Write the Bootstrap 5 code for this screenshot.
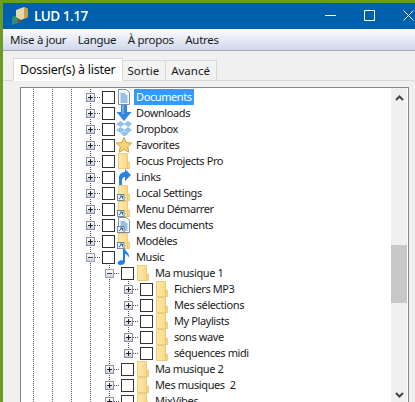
<!DOCTYPE html>
<html lang="fr"><head><meta charset="utf-8"><title>LUD 1.17</title>
<link rel="stylesheet" href="https://cdn.jsdelivr.net/npm/bootstrap@5.3.0/dist/css/bootstrap.min.css">
<style>
html,body{height:100%;overflow:hidden}
body{background:#6d9a22;font-family:"Noto Sans","Open Sans",sans-serif;color:#1a1a1a}
.wnd{height:399px;margin:3px 0 0 3px;background:#f0f0f0;overflow:hidden}
.ttl{height:26px;flex:none;background:#0060ae;color:#fff;padding-left:8px}
.ttl b{font:600 13.5px/24px "Open Sans",sans-serif;margin-left:5px;letter-spacing:-.5px}
.wbtns{margin-left:auto;width:100px;padding:0 0 2px 10px;gap:28px}
.mnu{height:22px;flex:none;background:linear-gradient(#fbfcfe,#d0d8ec);border-bottom:1px solid #a9adb4;font-size:11.5px;letter-spacing:-.3px;padding-left:7px;gap:11.500px}
.mnu span{line-height:21px}
.tabs{padding:8px 0 0 10px;border-bottom:1px solid #d9d9d9;height:30px;flex:none;--bs-nav-tabs-border-color:#d9d9d9}
.tabs .nav-link{font-size:11.5px;letter-spacing:0;color:#1a1a1a;padding:0 6px 0 5px;line-height:20px;height:21px;margin:1px 0 -1px;background:#f2f2f2;border:1px solid #d9d9d9;border-left-width:0;border-radius:0}
.tabs .nav-link.active{font-size:12.5px;letter-spacing:-.25px;background:#fff;height:23px;line-height:21px;margin:-1px 0 -1px;padding:0 6px;border:1px solid #d9d9d9;border-bottom-color:#fff;color:#111}
.tbox{margin:6px 6px 0 17px;flex:1 1 0;min-height:0;background:#fff;border:1px solid #828790;border-bottom:0}
.trlist{flex:1;padding:1px 0 0 3px;margin:0;overflow:hidden;font-size:11px;line-height:16px;letter-spacing:-.4px;white-space:nowrap}
.rw{height:16px}
.gd,.xp{flex:none;width:19px;height:16px;background:repeating-linear-gradient(#555 0 1px,transparent 1px 2px) 9px 0/1px 100% no-repeat}
.xp{display:flex;align-items:center;margin-right:1px;width:20px;padding-left:5px;background:repeating-linear-gradient(#555 0 1px,transparent 1px 2px) 9px 0/1px 100% no-repeat,repeating-linear-gradient(90deg,#555 0 1px,transparent 1px 2px) 14px 8px/6px 1px no-repeat}
.xp.hf{background:repeating-linear-gradient(#555 0 1px,transparent 1px 2px) 9px 0/1px 8px no-repeat,repeating-linear-gradient(90deg,#555 0 1px,transparent 1px 2px) 14px 8px/6px 1px no-repeat}
.xp svg{display:block;width:9px;height:9px}
.cbx{flex:none;width:13px;height:13px;border:1px solid #333;background:#fff}
.ic{flex:none;width:16px;height:16px;margin:0 4px 0 1px;display:block;overflow:visible}
.sel{background:#3399ff;color:#fff;margin-left:-2px;padding:0 2px}
.sb{flex:none;width:16px;background:#f0f0f0;margin-right:1px}
.thb{height:58px;flex:none;background:#c8c8c8;margin-top:144px}
.sb svg{display:block;margin:7px auto 0;flex:none}
</style></head><body>
<svg width="0" height="0" class="d-block" aria-hidden="true"><defs>
<linearGradient id="fy" x1="0" x2="1"><stop offset="0" stop-color="#fde9ab"/><stop offset="1" stop-color="#f8d67c"/></linearGradient>
<linearGradient id="xb" x1="0" x2="0" y2="1"><stop offset="0" stop-color="#fff"/><stop offset="1" stop-color="#c9cfdd"/></linearGradient>
<symbol id="pl" viewBox="0 0 9 9"><rect x=".5" y=".5" width="8" height="8" fill="url(#xb)" stroke="#8891a6"/><path d="M2 4.500h5M4.500 2v5" stroke="#222"/></symbol>
<symbol id="mn" viewBox="0 0 9 9"><rect x=".5" y=".5" width="8" height="8" fill="url(#xb)" stroke="#9aa2b4"/><path d="M2 4.500h5" stroke="#444"/></symbol>
<symbol id="fo" viewBox="0 0 16 16"><path d="M2.500.5h9v7l2 2v6h-11z" fill="url(#fy)" stroke="#e8cc80"/><path d="M11.500 8v8" stroke="#e6c878"/></symbol>
<symbol id="sc" viewBox="0 0 16 16"><rect x="1.500" y="9.500" width="6.500" height="6" fill="#e8eefa" stroke="#7a869c"/><path d="M3 14l3-3M4 11h2.500v2.500" stroke="#1f5fb0" fill="none"/></symbol>
<symbol id="dc" viewBox="0 0 16 16"><path d="M2.500.5h8l3 3v12h-11z" fill="#f6f9fd" stroke="#7f8fa5"/><path d="M4.500 5h5M4.500 7h7M4.500 9h7M4.500 11h7M4.500 13h7" stroke="#3b86c8"/></symbol>
<symbol id="dw" viewBox="0 0 16 16"><path d="M5 0h6v7h4.500L8 16 .5 7H5z" fill="#2f87e0"/><path d="M6 0h2v9H6z" fill="#6bb1ef"/></symbol>
<symbol id="db" viewBox="0 0 16 16"><path d="M4.500 0 9 3 4.500 6 0 3zM12 0l4 3-4 3-4-3zM4.500 6 9 9 4.500 12 0 9zM12 6l4 3-4 3-4-3zM4.500 12.500 8.500 10l4 2.500-4 3z" fill="#8fc0ee"/></symbol>
<symbol id="st" viewBox="0 0 16 16"><path d="M8 .5l2.300 5 5.400.6-4 3.700 1.100 5.400L8 12.500l-4.800 2.700 1.100-5.400-4-3.700 5.400-.6z" fill="#fbd27a" stroke="#dc9c3a"/></symbol>
<symbol id="li" viewBox="0 0 16 16"><path d="M3 16V9c0-4 3-6 6-6V0l6 6-6 6V8c-2 0-3 2-3 4v4z" fill="#2a82de"/></symbol>
<symbol id="mu" viewBox="0 0 16 16"><path d="M7 0h2c.5 3 5 4 4 9-.5-2-2-3.500-4-4v8c0 2-2 3-4.500 3S1 14.500 2 13c1-1.500 3-2 5-1.500z" fill="#1c84e4"/></symbol>
</defs></svg>
<div class="wnd d-flex flex-column">
 <div class="ttl d-flex align-items-center">
  <svg width="18" height="18" viewBox="0 0 18 18"><path d="M1 10l6-2v8l-6 2z" fill="#2c8f7c"/><path d="M7 8l3 1v7l-3 0z" fill="#7c4f2a"/><path d="M5 3l8-3 4 2v8l-7 3-5-3z" fill="#e4d9a8"/><path d="M13 0l4 2v8l-4 2z" fill="#c7a24e"/></svg>
  <b>LUD 1.17</b>
  <div class="wbtns d-flex align-items-center">
   <svg width="11" height="11" viewBox="0 0 11 11"><path d="M0 5.500h11" stroke="#fff"/></svg>
   <svg width="11" height="11" viewBox="0 0 11 11"><path d="M.5.500h10v10H.5z" fill="none" stroke="#fff"/></svg>
   <svg width="11" height="11" viewBox="0 0 11 11"><path d="M.5.500l10 10M10.500.500l-10 10" stroke="#fff"/></svg>
  </div>
 </div>
 <div class="mnu d-flex"><span>Mise à jour</span><span>Langue</span><span>À propos</span><span>Autres</span></div>
 <ul class="nav nav-tabs tabs flex-nowrap">
  <li class="nav-item"><a class="nav-link active" href="#">Dossier(s) à lister</a></li>
  <li class="nav-item"><a class="nav-link" href="#">Sortie</a></li>
  <li class="nav-item"><a class="nav-link" href="#">Avancé</a></li>
 </ul>
 <div class="tbox d-flex">
  <ul class="trlist list-unstyled">
   <li class="rw d-flex align-items-center"><i class="gd"></i><i class="gd"></i><i class="gd"></i><i class="xp"><svg><use href="#pl"/></svg></i><i class="cbx"></i><svg class="ic"><use href="#dc"/></svg><span class="sel">Documents</span></li>
   <li class="rw d-flex align-items-center"><i class="gd"></i><i class="gd"></i><i class="gd"></i><i class="xp"><svg><use href="#pl"/></svg></i><i class="cbx"></i><svg class="ic"><use href="#dw"/></svg><span>Downloads</span></li>
   <li class="rw d-flex align-items-center"><i class="gd"></i><i class="gd"></i><i class="gd"></i><i class="xp"><svg><use href="#pl"/></svg></i><i class="cbx"></i><svg class="ic"><use href="#db"/></svg><span>Dropbox</span></li>
   <li class="rw d-flex align-items-center"><i class="gd"></i><i class="gd"></i><i class="gd"></i><i class="xp"><svg><use href="#pl"/></svg></i><i class="cbx"></i><svg class="ic"><use href="#st"/></svg><span>Favorites</span></li>
   <li class="rw d-flex align-items-center"><i class="gd"></i><i class="gd"></i><i class="gd"></i><i class="xp"><svg><use href="#pl"/></svg></i><i class="cbx"></i><svg class="ic"><use href="#fo"/></svg><span>Focus Projects Pro</span></li>
   <li class="rw d-flex align-items-center"><i class="gd"></i><i class="gd"></i><i class="gd"></i><i class="xp"><svg><use href="#pl"/></svg></i><i class="cbx"></i><svg class="ic"><use href="#li"/></svg><span>Links</span></li>
   <li class="rw d-flex align-items-center"><i class="gd"></i><i class="gd"></i><i class="gd"></i><i class="xp"><svg><use href="#pl"/></svg></i><i class="cbx"></i><svg class="ic"><use href="#fo"/><use href="#sc"/></svg><span>Local Settings</span></li>
   <li class="rw d-flex align-items-center"><i class="gd"></i><i class="gd"></i><i class="gd"></i><i class="xp"><svg><use href="#pl"/></svg></i><i class="cbx"></i><svg class="ic"><use href="#fo"/><use href="#sc"/></svg><span>Menu Démarrer</span></li>
   <li class="rw d-flex align-items-center"><i class="gd"></i><i class="gd"></i><i class="gd"></i><i class="xp"><svg><use href="#pl"/></svg></i><i class="cbx"></i><svg class="ic"><use href="#dc"/><use href="#sc"/></svg><span>Mes documents</span></li>
   <li class="rw d-flex align-items-center"><i class="gd"></i><i class="gd"></i><i class="gd"></i><i class="xp"><svg><use href="#pl"/></svg></i><i class="cbx"></i><svg class="ic"><use href="#fo"/><use href="#sc"/></svg><span>Modèles</span></li>
   <li class="rw d-flex align-items-center"><i class="gd"></i><i class="gd"></i><i class="gd"></i><i class="xp"><svg><use href="#mn"/></svg></i><i class="cbx"></i><svg class="ic"><use href="#mu"/></svg><span>Music</span></li>
   <li class="rw d-flex align-items-center"><i class="gd"></i><i class="gd"></i><i class="gd"></i><i class="gd"></i><i class="xp"><svg><use href="#mn"/></svg></i><i class="cbx"></i><svg class="ic"><use href="#fo"/></svg><span>Ma musique 1</span></li>
   <li class="rw d-flex align-items-center"><i class="gd"></i><i class="gd"></i><i class="gd"></i><i class="gd"></i><i class="gd"></i><i class="xp"><svg><use href="#pl"/></svg></i><i class="cbx"></i><svg class="ic"><use href="#fo"/></svg><span>Fichiers MP3</span></li>
   <li class="rw d-flex align-items-center"><i class="gd"></i><i class="gd"></i><i class="gd"></i><i class="gd"></i><i class="gd"></i><i class="xp"><svg><use href="#pl"/></svg></i><i class="cbx"></i><svg class="ic"><use href="#fo"/></svg><span>Mes sélections</span></li>
   <li class="rw d-flex align-items-center"><i class="gd"></i><i class="gd"></i><i class="gd"></i><i class="gd"></i><i class="gd"></i><i class="xp"><svg><use href="#pl"/></svg></i><i class="cbx"></i><svg class="ic"><use href="#fo"/></svg><span>My Playlists</span></li>
   <li class="rw d-flex align-items-center"><i class="gd"></i><i class="gd"></i><i class="gd"></i><i class="gd"></i><i class="gd"></i><i class="xp"><svg><use href="#pl"/></svg></i><i class="cbx"></i><svg class="ic"><use href="#fo"/></svg><span>sons wave</span></li>
   <li class="rw d-flex align-items-center"><i class="gd"></i><i class="gd"></i><i class="gd"></i><i class="gd"></i><i class="gd"></i><i class="xp hf"><svg><use href="#pl"/></svg></i><i class="cbx"></i><svg class="ic"><use href="#fo"/></svg><span>séquences midi</span></li>
   <li class="rw d-flex align-items-center"><i class="gd"></i><i class="gd"></i><i class="gd"></i><i class="gd"></i><i class="xp"><svg><use href="#pl"/></svg></i><i class="cbx"></i><svg class="ic"><use href="#fo"/></svg><span>Ma musique 2</span></li>
   <li class="rw d-flex align-items-center"><i class="gd"></i><i class="gd"></i><i class="gd"></i><i class="gd"></i><i class="xp"><svg><use href="#pl"/></svg></i><i class="cbx"></i><svg class="ic"><use href="#fo"/></svg><span>Mes musiques&nbsp; 2</span></li>
   <li class="rw d-flex align-items-center"><i class="gd"></i><i class="gd"></i><i class="gd"></i><i class="gd"></i><i class="xp"><svg><use href="#pl"/></svg></i><i class="cbx"></i><svg class="ic"><use href="#fo"/></svg><span>MixVibes</span></li>
  </ul>
  <div class="sb d-flex flex-column">
   <svg width="9" height="6" viewBox="0 0 9 6"><path d="M1 5l3.500-3.500L8 5" fill="none" stroke="#444" stroke-width="2"/></svg>
   <div class="thb"></div>
   <div class="flex-grow-1"></div>
   <svg class="mb-1" width="9" height="6" viewBox="0 0 9 6"><path d="M1 1l3.500 3.500L8 1" fill="none" stroke="#444" stroke-width="2"/></svg>
  </div>
 </div>
</div>
</body></html>
